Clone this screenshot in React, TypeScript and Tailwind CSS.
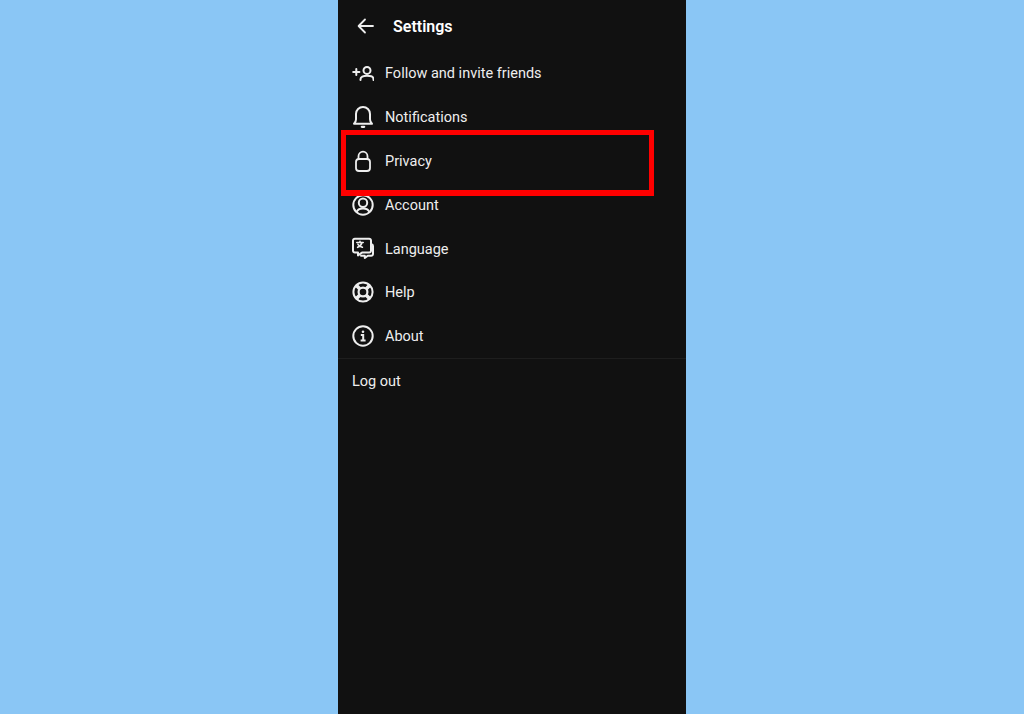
import React from 'react';

const FollowIcon = () => (
    <svg width="22" height="22" viewBox="0 0 22 22" fill="none" stroke="currentColor" strokeWidth="2" strokeLinecap="round">
        <circle cx="15" cy="8.400" r="3.500" />
        <path d="M8.500 18v-.8c0-2.200 2.500-3.400 6.500-3.400s6.500 1.200 6.500 3.400v.8" />
        <path d="M1.200 10h6.200M4.300 6.900v6.200" />
    </svg>
);

const BellIcon = () => (
    <svg width="22" height="24" viewBox="0 0 22 24" fill="none" stroke="currentColor" strokeWidth="2" strokeLinejoin="round">
        <path d="M2 18.800c1.400-1.300 2-2.500 2-4.600V9a7 7 0 0 1 14 0v5.200c0 2.100.6 3.300 2 4.600z" />
        <path d="M9.800 21.800h2.400" strokeWidth="2.200" strokeLinecap="round" />
    </svg>
);

const LockIcon = () => (
    <svg width="22" height="24" viewBox="0 0 22 24" fill="none" stroke="currentColor" strokeWidth="1.800">
        <rect x="4" y="10" width="14" height="12" rx="3" />
        <path d="M6.500 10V7.200a4.500 4.500 0 0 1 9 0V10" />
    </svg>
);

const AccountIcon = () => (
    <svg width="22" height="22" viewBox="0 0 22 22" fill="none" stroke="currentColor" strokeWidth="2">
        <circle cx="11" cy="11" r="9.700" />
        <circle cx="11" cy="8.800" r="4.200" />
        <path d="M4.600 18c.8-2.500 3.200-3.600 6.400-3.600s5.600 1.100 6.400 3.600" />
    </svg>
);

const LanguageIcon = () => (
    <svg width="22" height="22" viewBox="0 0 22 22" fill="none" stroke="currentColor" strokeWidth="2" strokeLinejoin="round" strokeLinecap="round">
        <path d="M2.800 1.800h14.400a1.800 1.800 0 0 1 1.800 1.800v10.200a1.800 1.800 0 0 1-1.800 1.800H10l-4 2.800v-2.800H2.800A1.800 1.800 0 0 1 1 13.800V3.600a1.800 1.800 0 0 1 1.800-1.800z" />
        <path d="M19.600 7.200a1.900 1.900 0 0 1 1.400 1.800v8a1.800 1.800 0 0 1-1.800 1.800h-3.400l-3 2.200v-2.200H9" />
        <path d="M4.800 5.500h6.400M8 4.200v1.300M10 5.500c-.6 2.400-2.400 4-4.400 4.800M6 7.300c.8 1.400 2.400 2.500 4.400 3" strokeWidth="1.600" />
    </svg>
);

const HelpIcon = () => (
    <svg width="22" height="22" viewBox="0 0 22 22" fill="none" stroke="currentColor" strokeWidth="2">
        <circle cx="11" cy="11" r="9.600" />
        <circle cx="11" cy="11" r="4.400" strokeWidth="2.200" />
        <path d="M4.200 4.200l3.500 3.500M17.800 4.200l-3.500 3.500M4.200 17.800l3.500-3.500M17.800 17.800l-3.500-3.500" strokeWidth="3.600" />
    </svg>
);

const AboutIcon = () => (
    <svg width="22" height="22" viewBox="0 0 22 22" fill="none" stroke="currentColor" strokeWidth="2">
        <circle cx="11" cy="11" r="9.700" />
        <circle cx="11" cy="6.800" r="1.300" fill="currentColor" stroke="none" />
        <path d="M8.800 10h2.400v5.400M8.600 15.600h5" />
    </svg>
);

const items = [
    { label: 'Follow and invite friends', Icon: FollowIcon },
    { label: 'Notifications', Icon: BellIcon },
    { label: 'Privacy', Icon: LockIcon },
    { label: 'Account', Icon: AccountIcon },
    { label: 'Language', Icon: LanguageIcon },
    { label: 'Help', Icon: HelpIcon },
    { label: 'About', Icon: AboutIcon },
];

export default function App() {
    return (
        <div className="flex h-[714px] justify-center overflow-hidden bg-[#8ac6f5] font-['Roboto',sans-serif]">
            <div className="relative flex w-[348px] flex-col bg-[#111111] text-[#eeeeee]">
                {/* Header */}
                <div className="flex h-[51.3px] items-center pl-[17px] pt-px">
                    <svg width="22" height="22" viewBox="0 0 22 22" fill="none" stroke="currentColor" strokeWidth="1.800" strokeLinecap="round" strokeLinejoin="round">
                        <path d="M18 11H4M10 4.500L3.600 11l6.400 6.500" />
                    </svg>
                    <span className="ml-4 pt-[2px] text-[16px] font-semibold text-white">Settings</span>
                </div>

                {/* Rows */}
                <div className="flex flex-col">
                    {items.map(({ label, Icon }) => (
                        <div key={label} className="flex h-[43.8px] items-center pl-[14px]">
                            <div className="flex w-[22px] items-center justify-center">
                                <Icon />
                            </div>
                            <span className="ml-[11px] pt-[2px] text-[14.5px]">{label}</span>
                        </div>
                    ))}
                </div>

                <div className="mt-[0.1px] border-t border-[#1e1e1e] pl-[14px] pt-[12px] text-[14.5px]">
                    Log out
                </div>

                {/* Red highlight drawn over the screenshot */}
                <div className="absolute left-[3px] top-[130px] h-[66px] w-[313px] border-[5px] border-b-[6px] border-[#ff0000]" />
            </div>
        </div>
    );
}
